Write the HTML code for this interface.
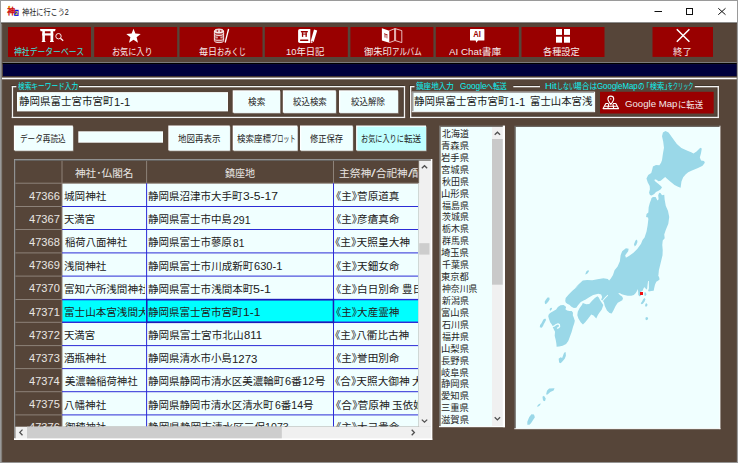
<!DOCTYPE html>
<html lang="ja"><head><meta charset="utf-8"><title>神社に行こう2</title><style>
html,body{margin:0;padding:0}
body{width:738px;height:463px;overflow:hidden;position:relative;background:#564539;font-family:"Liberation Sans","Noto Sans CJK JP",sans-serif}
body div,body span.t,body svg{position:absolute}
div div{position:absolute}
.t{white-space:pre;transform-origin:0 0;display:block}
</style></head><body>
<svg style="left:0;top:0" width="738" height="463" viewBox="0 0 738 463"><rect x="0" y="0" width="738" height="463" fill="#8c8c8c"/><rect x="0" y="0" width="738" height="463" fill="#9a9a9a"/><rect x="1.5" y="1" width="735.3" height="461.1" fill="#6b6259"/><rect x="2.3" y="1" width="734.4" height="461" fill="#564539"/><rect x="1" y="1" width="736" height="21.1" fill="#ffffff"/><rect x="1" y="22.1" width="736" height="0.9" fill="#929292"/><rect x="1" y="23" width="736" height="0.6" fill="#4c3e35"/></svg>
<svg style="left:6px;top:5px" width="14" height="13" viewBox="0 0 14 13"><rect x="8.2" y="4.8" width="4.4" height="6.1" fill="#1010e0"/><text x="1.3" y="9.3" font-size="7.8" font-weight="700" fill="#cc1010" stroke="#cc1010" stroke-width="0.3" font-family='"Liberation Sans","Noto Sans CJK JP",sans-serif'>神</text><text x="8.9" y="10.3" font-size="5.8" font-weight="700" fill="#f0e020" font-family='"Liberation Sans",sans-serif'>2</text><circle cx="3.2" cy="1.9" r="1.1" fill="#e8a020"/></svg>
<span class="t" style="left:21.80px;top:7.90px;font-size:8.5px;line-height:8.5px;color:#161616;transform:scale(0.839,1.000);">神社に行こう2</span>
<svg style="left:650px;top:4px" width="80" height="16" viewBox="0 0 80 16"><g stroke="#111" stroke-width="1" fill="none"><path d="M4.5 7.5H12"/><rect x="36.5" y="4.5" width="6" height="6"/><path d="M68.3 4.3L75.5 10.7M75.5 4.3L68.3 10.7"/></g></svg>
<svg style="left:0;top:0" width="738" height="463" viewBox="0 0 738 463"><rect x="8" y="27" width="83" height="30" fill="#990000"/><rect x="94.2" y="27" width="83" height="30" fill="#990000"/><rect x="179.5" y="27" width="83" height="30" fill="#990000"/><rect x="264.8" y="27" width="83" height="30" fill="#990000"/><rect x="350.4" y="27" width="83" height="30" fill="#990000"/><rect x="435.8" y="27" width="83" height="30" fill="#990000"/><rect x="521.5" y="27" width="83" height="30" fill="#990000"/><rect x="652.5" y="27" width="60.5" height="29.9" fill="#990000"/></svg>
<svg style="left:0;top:24px" width="738" height="36" viewBox="0 24 738 36">
<g fill="#fff">
<!-- torii -->
<path d="M40 29H55.6L55 31.3H40.6Z"/><rect x="42.3" y="31" width="2.6" height="11"/><rect x="50.5" y="31" width="2.7" height="11"/><rect x="42.3" y="33.3" width="10.9" height="2.2"/><rect x="41.8" y="41" width="3.6" height="1"/><rect x="50" y="41" width="3.7" height="1"/>
<!-- star -->
<path d="M133.5 28.7L135.4 33.6L140.7 33.9L136.6 37.2L138 42.8L133.5 39.7L129 42.8L130.4 37.2L126.3 33.9L131.6 33.6Z"/>
<!-- grid -->
<rect x="556" y="29" width="6" height="5.9"/><rect x="564" y="29" width="6" height="5.9"/><rect x="556" y="36.7" width="6" height="6"/><rect x="564" y="36.7" width="6" height="6"/>
<!-- AI bubble -->
<path d="M470.6 29H483.8Q484.4 29 484.4 29.6V40Q484.4 40.6 483.8 40.6H478L476.4 42.8L475.6 40.6H470.6Q470 40.6 470 40V29.6Q470 29 470.6 29Z"/>
<!-- diary -->
<path d="M299.8 29H310.3V43H299.8Q298.1 43 298.1 41.3V30.7Q298.1 29 299.8 29Z"/>
<path d="M314 29.6L317.2 30.5L313.8 41.6L311.2 43.2L310.9 40.6Z"/>
<!-- album left leaf -->
<path d="M381.9 28.3L389.3 30.8V42.8L381.9 40.5Z"/>
</g>
<g fill="none" stroke="#fff">
<circle cx="58.5" cy="36.2" r="2.7" stroke-width="0.9"/><path d="M60.4 38.2L63.2 40.8" stroke-width="1.2"/>
<!-- omikuji -->
<g stroke-width="0.8" stroke="#fff"><path d="M214.4 31V40.6A4.6 2 0 0 0 223.6 40.6V31" fill="#fff" fill-opacity="0.28"/><ellipse cx="219" cy="31" rx="4.6" ry="2" fill="#fff" fill-opacity="0.75"/><path d="M214.4 33.6A4.6 2 0 0 0 223.6 33.6"/><path d="M214.4 35.6A4.6 2 0 0 0 223.6 35.6" stroke-opacity="0.7"/><path d="M214.4 38.6A4.6 2 0 0 0 223.6 38.6" stroke-opacity="0.8"/></g>
<path d="M228.6 29L225.2 42.5" stroke-width="1.3"/>
<!-- album -->
<g stroke-width="0.9" stroke="#f0d0d0"><path d="M389.3 30.8L395 28.6L401.8 30.6V42.6L395 40.5L389.3 42.6"/><path d="M394.6 28.6V40.5M395.6 28.6V40.5"/></g>
<!-- exit X -->
<path d="M676.8 29.2L689.4 41.8M689.4 29.2L676.8 41.8" stroke-width="1.5"/>
</g>
<g fill="#990000">
<rect x="217.8" y="36.4" width="2.6" height="2.6"/><circle cx="217.4" cy="30.9" r="0.75"/><circle cx="220.7" cy="30.9" r="0.75"/>
<path d="M300.7 31H308L307.5 32.5H301.2Z"/><rect x="301.9" y="32.2" width="1.3" height="4.7"/><rect x="305.5" y="32.2" width="1.3" height="4.7"/><rect x="301.9" y="33.6" width="4.9" height="1"/>
<rect x="300" y="39.6" width="8.4" height="1.3" rx="0.6"/>
<path d="M384 33.2L387.6 34.4L387.4 35.3L384.2 34.3Z"/><path d="M384.6 34.4L385.4 34.6V37.8L384.6 37.5ZM386.6 35L387.3 35.2V38.4L386.6 38.2Z"/>
<circle cx="312.2" cy="41.3" r="0.6"/>
</g>
<text x="473.3" y="37.4" font-size="8.2" font-weight="700" fill="#990000" font-family='"Liberation Sans",sans-serif' textLength="7.6" lengthAdjust="spacingAndGlyphs">AI</text>
</svg>
<span class="t" style="left:14.00px;top:47.00px;font-size:9.5px;line-height:9.5px;color:#35e0dc;transform:scale(0.823,1.000);">神社データーベース</span><span class="t" style="left:111.60px;top:46.90px;font-size:9.5px;line-height:9.5px;color:#f4e8e8;transform:scale(0.855,1.000);">お気に入り</span><span class="t" style="left:199.20px;top:47.00px;font-size:9.5px;line-height:9.5px;color:#f4e8e8;transform:scale(0.952,1.000);">毎日</span><span class="t" style="left:216.70px;top:46.65px;font-size:9.5px;line-height:9.5px;color:#f4e8e8;transform:scale(0.759,1.000);">おみくじ</span><span class="t" style="left:285.60px;top:47.10px;font-size:9.5px;line-height:9.5px;color:#f4e8e8;transform:scale(0.985,1.000);">10年日記</span><span class="t" style="left:363.90px;top:46.85px;font-size:9.5px;line-height:9.5px;color:#f4e8e8;transform:scale(0.975,1.000);">御朱印</span><span class="t" style="left:391.90px;top:47.10px;font-size:9.5px;line-height:9.5px;color:#f4e8e8;transform:scale(0.785,1.000);">アルバム</span><span class="t" style="left:448.80px;top:47.00px;font-size:9.5px;line-height:9.5px;color:#f4e8e8;transform:scale(1.030,1.000);">AI Chat書庫</span><span class="t" style="left:543.20px;top:47.00px;font-size:9.5px;line-height:9.5px;color:#f4e8e8;transform:scale(0.966,1.000);">各種設定</span><span class="t" style="left:673.30px;top:46.95px;font-size:9.5px;line-height:9.5px;color:#f4e8e8;transform:scale(0.995,1.000);">終了</span>
<svg style="left:0;top:0" width="738" height="463" viewBox="0 0 738 463"><rect x="2.6" y="62" width="734.1" height="1" fill="#8a8a8a"/><rect x="2.6" y="62.9" width="734.1" height="1.3" fill="#000000"/><rect x="2.9" y="64.1" width="733.8" height="12.1" fill="#00003c"/><rect x="2.6" y="76.3" width="734.1" height="1.3" fill="#46372f"/><rect x="2" y="77.6" width="734.7" height="1.7" fill="#ffffff"/><rect x="10.9" y="85.1" width="1" height="32.05" fill="#41352c"/><rect x="402.9" y="87.3" width="1" height="29.45" fill="#41352c"/><rect x="13.1" y="115.85" width="390.7" height="1" fill="#41352c"/><rect x="11.8" y="86" width="1.3" height="32.05" fill="#f4f4f4"/><rect x="403.8" y="86" width="1.3" height="32.05" fill="#f4f4f4"/><rect x="11.8" y="116.75" width="393.3" height="1.3" fill="#f4f4f4"/><rect x="11.8" y="85.1" width="3.5" height="1" fill="#41352c"/><rect x="11.8" y="86" width="4.5" height="1.3" fill="#f4f4f4"/><rect x="79" y="85.1" width="325.1" height="1" fill="#41352c"/><rect x="79" y="86" width="326.1" height="1.3" fill="#f4f4f4"/><rect x="409.1" y="85.1" width="1" height="32.05" fill="#41352c"/><rect x="716.7" y="87.3" width="1" height="29.45" fill="#41352c"/><rect x="411.3" y="115.85" width="306.3" height="1" fill="#41352c"/><rect x="410" y="86" width="1.3" height="32.05" fill="#f4f4f4"/><rect x="717.6" y="86" width="1.3" height="32.05" fill="#f4f4f4"/><rect x="410" y="116.75" width="308.9" height="1.3" fill="#f4f4f4"/><rect x="410" y="85.1" width="3.5" height="1" fill="#41352c"/><rect x="410" y="86" width="4.5" height="1.3" fill="#f4f4f4"/><rect x="513.3" y="85.1" width="25.7" height="1" fill="#41352c"/><rect x="513.3" y="86" width="26.7" height="1.3" fill="#f4f4f4"/><rect x="694.8" y="85.1" width="23.1" height="1" fill="#41352c"/><rect x="694.8" y="86" width="24.1" height="1.3" fill="#f4f4f4"/></svg>
<span class="t" style="left:17.50px;top:82.40px;font-size:8.3px;line-height:8.3px;color:#0cf2f2;transform:scale(0.806,1.000);">検索キーワード入力</span><span class="t" style="left:415.80px;top:82.40px;font-size:8.3px;line-height:8.3px;color:#0cf2f2;transform:scale(0.912,1.000);">鎮座地入力</span><span class="t" style="left:459.70px;top:82.45px;font-size:8.4px;line-height:8.4px;color:#0cf2f2;transform:scale(0.987,1.000);">Google</span><span class="t" style="left:485.90px;top:82.40px;font-size:8.3px;line-height:8.3px;color:#0cf2f2;transform:scale(0.833,1.000);">へ転送</span><span class="t" style="left:545.10px;top:82.45px;font-size:8.4px;line-height:8.4px;color:#0cf2f2;transform:scale(1.140,1.000);">Hit</span><span class="t" style="left:556.90px;top:81.95px;font-size:8.3px;line-height:8.3px;color:#0cf2f2;transform:scale(0.720,1.000);">しない</span><span class="t" style="left:573.60px;top:82.40px;font-size:8.3px;line-height:8.3px;color:#0cf2f2;transform:scale(0.931,1.000);">場合は</span><span class="t" style="left:597.30px;top:82.45px;font-size:8.4px;line-height:8.4px;color:#0cf2f2;transform:scale(0.940,1.000);">GoogleMap</span><span class="t" style="left:637.90px;top:82.05px;font-size:8.3px;line-height:8.3px;color:#0cf2f2;transform:scale(0.787,1.000);">の</span><span class="t" style="left:645.50px;top:82.40px;font-size:8.3px;line-height:8.3px;color:#0cf2f2;transform:scale(0.880,1.000);">｢検索｣</span><span class="t" style="left:668.30px;top:81.95px;font-size:8.3px;line-height:8.3px;color:#0cf2f2;transform:scale(0.609,1.000);">をクリック</span>
<svg style="left:0;top:0" width="738" height="463" viewBox="0 0 738 463"><rect x="17" y="92.1" width="211" height="19.3" fill="#fbffff"/><rect x="18" y="93.1" width="209" height="17.3" fill="#F0FFFF"/></svg>
<span class="t" style="left:18.70px;top:96.35px;font-size:10.7px;line-height:10.7px;color:#181818;transform:scale(0.983,1.000);">静岡県富士宮市宮町</span><span class="t" style="left:114.00px;top:96.50px;font-size:10.7px;line-height:10.7px;color:#181818;transform:scale(1.048,1.000);">1-1</span>
<svg style="left:0;top:0" width="738" height="463" viewBox="0 0 738 463"><rect x="411.8" y="91.7" width="183.3" height="20.5" fill="#ffffff"/><rect x="411.8" y="91.7" width="182.3" height="19.6" fill="#9d9d9d"/><rect x="413.5" y="92.9" width="180.6" height="18.4" fill="#F0FFFF"/></svg>
<span class="t" style="left:413.70px;top:96.15px;font-size:10.7px;line-height:10.7px;color:#181818;transform:scale(0.983,1.000);">静岡県富士宮市宮町</span><span class="t" style="left:508.90px;top:96.50px;font-size:10.7px;line-height:10.7px;color:#181818;transform:scale(1.059,1.000);">1-1</span><span class="t" style="left:529.80px;top:96.15px;font-size:10.7px;line-height:10.7px;color:#181818;transform:scale(0.972,1.000);">富士山本宮浅</span>
<svg style="left:0;top:0" width="738" height="463" viewBox="0 0 738 463"><rect x="233.7" y="91.3" width="47" height="22.3" fill="#9e9993"/><rect x="232.7" y="90.3" width="47.3" height="22.4" fill="#ffffff"/><rect x="233.9" y="91.4" width="46.1" height="21.3" fill="#F0FFFF"/></svg>
<span class="t" style="left:248.20px;top:98.25px;font-size:9.2px;line-height:9.2px;color:#222;transform:scale(0.939,1.000);">検索</span>
<svg style="left:0;top:0" width="738" height="463" viewBox="0 0 738 463"><rect x="283.8" y="91.3" width="52.6" height="22.3" fill="#9e9993"/><rect x="282.8" y="90.3" width="52.9" height="22.4" fill="#ffffff"/><rect x="284" y="91.4" width="51.7" height="21.3" fill="#F0FFFF"/></svg>
<span class="t" style="left:292.60px;top:98.25px;font-size:9.2px;line-height:9.2px;color:#222;transform:scale(0.919,1.000);">絞込検索</span>
<svg style="left:0;top:0" width="738" height="463" viewBox="0 0 738 463"><rect x="340" y="91.3" width="58.6" height="22.3" fill="#9e9993"/><rect x="339" y="90.3" width="58.9" height="22.4" fill="#ffffff"/><rect x="340.2" y="91.4" width="57.7" height="21.3" fill="#F0FFFF"/></svg>
<span class="t" style="left:351.30px;top:98.25px;font-size:9.2px;line-height:9.2px;color:#222;transform:scale(0.924,1.000);">絞込解除</span>
<svg style="left:0;top:0" width="738" height="463" viewBox="0 0 738 463"><rect x="14.9" y="126.5" width="58.6" height="24.8" fill="#9e9993"/><rect x="13.9" y="125.5" width="58.9" height="24.9" fill="#ffffff"/><rect x="15.1" y="126.6" width="57.7" height="23.8" fill="#F0FFFF"/></svg>
<span class="t" style="left:20.20px;top:135.10px;font-size:9.2px;line-height:9.2px;color:#222;transform:scale(0.828,1.000);">データ再読込</span>
<svg style="left:0;top:0" width="738" height="463" viewBox="0 0 738 463"><rect x="78.3" y="131.3" width="84.7" height="11.4" fill="#fbffff"/><rect x="79.3" y="132.3" width="82.7" height="9.4" fill="#F0FFFF"/><rect x="169.3" y="126.5" width="61.1" height="24.8" fill="#9e9993"/><rect x="168.3" y="125.5" width="61.4" height="24.9" fill="#ffffff"/><rect x="169.5" y="126.6" width="60.2" height="23.8" fill="#F0FFFF"/></svg>
<span class="t" style="left:178.00px;top:134.95px;font-size:9.2px;line-height:9.2px;color:#222;transform:scale(0.924,1.000);">地図再表示</span>
<svg style="left:0;top:0" width="738" height="463" viewBox="0 0 738 463"><rect x="233.7" y="126.5" width="64.3" height="24.8" fill="#9e9993"/><rect x="232.7" y="125.5" width="64.6" height="24.9" fill="#ffffff"/><rect x="233.9" y="126.6" width="63.4" height="23.8" fill="#F0FFFF"/></svg>
<span class="t" style="left:237.30px;top:134.95px;font-size:9.2px;line-height:9.2px;color:#222;transform:scale(0.924,1.000);">検索座標</span><span class="t" style="left:270.60px;top:135.05px;font-size:9.2px;line-height:9.2px;color:#222;transform:scale(0.669,1.000);">プロット</span>
<svg style="left:0;top:0" width="738" height="463" viewBox="0 0 738 463"><rect x="301" y="126.5" width="52.3" height="24.8" fill="#9e9993"/><rect x="300" y="125.5" width="52.6" height="24.9" fill="#ffffff"/><rect x="301.2" y="126.6" width="51.4" height="23.8" fill="#F0FFFF"/></svg>
<span class="t" style="left:310.20px;top:134.95px;font-size:9.2px;line-height:9.2px;color:#222;transform:scale(0.900,1.000);">修正保存</span>
<svg style="left:0;top:0" width="738" height="463" viewBox="0 0 738 463"><rect x="357.1" y="126.5" width="69.6" height="24.8" fill="#9e9993"/><rect x="356.1" y="125.5" width="69.9" height="24.9" fill="#ffffff"/><rect x="357.3" y="126.6" width="68.7" height="23.8" fill="#c0ffff"/></svg>
<span class="t" style="left:360.70px;top:134.95px;font-size:9.2px;line-height:9.2px;color:#222;transform:scale(0.778,1.000);">お気に入りに</span><span class="t" style="left:404.20px;top:134.95px;font-size:9.2px;line-height:9.2px;color:#222;transform:scale(0.929,1.000);">転送</span>
<svg style="left:0;top:0" width="738" height="463" viewBox="0 0 738 463"><rect x="600" y="91.8" width="113.7" height="21.7" fill="#990000"/></svg>
<svg style="left:602px;top:94px" width="18" height="16" viewBox="602 94 18 16"><g fill="none" stroke="#fff" stroke-width="1.1" stroke-linejoin="round">
<path d="M610.8 104.4C608.8 101.8 607.9 100.5 607.9 99A2.9 2.9 0 0 1 613.7 99C613.7 100.5 612.8 101.8 610.8 104.4Z"/><circle cx="610.8" cy="98.9" r="0.7" fill="#fff" stroke="none"/>
<path d="M608.6 103.5H605.8L603.1 108.6H618.5L615.8 103.5H613M604.5 106.2H617.1M608.7 103.8L607.9 108.6M612.9 103.8L613.7 108.6"/></g></svg>
<span class="t" style="left:625.40px;top:100.40px;font-size:9.8px;line-height:9.8px;color:#f4e8e8;transform:scale(0.982,0.930);">Google Map</span><span class="t" style="left:677.60px;top:100.70px;font-size:9.2px;line-height:9.2px;color:#f4e8e8;transform:scale(0.908,1.000);">に転送</span>
<svg style="left:0;top:0" width="738" height="463" viewBox="0 0 738 463"><rect x="14" y="159" width="418.2" height="281" fill="#ffffff"/><rect x="14" y="159" width="416.9" height="279.5" fill="#9c9c9c"/><rect x="14.8" y="159.8" width="416.1" height="278.7" fill="#6a6a6a"/><rect x="15.4" y="160.8" width="416.2" height="278.6" fill="#564539"/><rect x="62" y="183.2" width="356.3" height="243.5" fill="#F0FFFF"/><rect x="62" y="299.6" width="356.3" height="22.4" fill="#00ffff"/><rect x="15.4" y="182.7" width="46.6" height="1" fill="#8d8279"/><rect x="62" y="182.7" width="356.3" height="1" fill="#8d8279"/><rect x="61.5" y="160.8" width="1" height="22.4" fill="#8d8279"/><rect x="146.1" y="160.8" width="1" height="22.4" fill="#8d8279"/><rect x="333" y="160.8" width="1" height="22.4" fill="#8d8279"/><rect x="15.4" y="206" width="46.6" height="1" fill="#8d8279"/><rect x="15.4" y="229" width="46.6" height="1" fill="#8d8279"/><rect x="15.4" y="252.4" width="46.6" height="1" fill="#8d8279"/><rect x="15.4" y="275.6" width="46.6" height="1" fill="#8d8279"/><rect x="15.4" y="299" width="46.6" height="1" fill="#8d8279"/><rect x="15.4" y="321.8" width="46.6" height="1" fill="#8d8279"/><rect x="15.4" y="345.1" width="46.6" height="1" fill="#8d8279"/><rect x="15.4" y="368.1" width="46.6" height="1" fill="#8d8279"/><rect x="15.4" y="391.2" width="46.6" height="1" fill="#8d8279"/><rect x="15.4" y="414.4" width="46.6" height="1" fill="#8d8279"/><rect x="61.5" y="183.2" width="1" height="243.5" fill="#8d8279"/><rect x="62" y="206" width="356.3" height="1" fill="#2c2cd6"/><rect x="62" y="229" width="356.3" height="1" fill="#2c2cd6"/><rect x="62" y="252.4" width="356.3" height="1" fill="#2c2cd6"/><rect x="62" y="275.6" width="356.3" height="1" fill="#2c2cd6"/><rect x="62" y="299" width="356.3" height="1" fill="#2c2cd6"/><rect x="62" y="321.8" width="356.3" height="1" fill="#2c2cd6"/><rect x="62" y="345.1" width="356.3" height="1" fill="#2c2cd6"/><rect x="62" y="368.1" width="356.3" height="1" fill="#2c2cd6"/><rect x="62" y="391.2" width="356.3" height="1" fill="#2c2cd6"/><rect x="62" y="414.4" width="356.3" height="1" fill="#2c2cd6"/><rect x="146.1" y="183.2" width="1" height="243.5" fill="#2c2cd6"/><rect x="333" y="183.2" width="1" height="243.5" fill="#2c2cd6"/><rect x="62" y="298.9" width="356.3" height="1.4" fill="#2c2cd6"/><rect x="62" y="321.7" width="356.3" height="1.3" fill="#2c2cd6"/><rect x="146" y="298.9" width="188.1" height="1.5" fill="#1c1cb8"/><rect x="146" y="321.6" width="188.1" height="1.5" fill="#1c1cb8"/><rect x="146" y="298.9" width="1.5" height="24.2" fill="#1c1cb8"/><rect x="332.7" y="298.9" width="1.5" height="24.2" fill="#1c1cb8"/></svg>
<span class="t" style="left:75.30px;top:168.70px;font-size:10.45px;line-height:10.45px;color:#e9e6e3;transform:scale(1.017,1.000);">神社･仏閣名</span><span class="t" style="left:224.70px;top:168.70px;font-size:10.45px;line-height:10.45px;color:#e9e6e3;transform:scale(0.962,1.000);">鎮座地</span><span class="t" style="left:339.30px;top:168.70px;font-size:10.45px;line-height:10.45px;color:#e9e6e3;transform:scale(1.028,1.000);">主祭神</span><span class="t" style="left:371.30px;top:168.90px;font-size:10.45px;line-height:10.45px;color:#e9e6e3;transform:scale(1.597,1.000);">/</span><span class="t" style="left:375.80px;top:168.70px;font-size:10.45px;line-height:10.45px;color:#e9e6e3;transform:scale(1.007,1.000);">合祀神</span><span class="t" style="left:407.80px;top:168.90px;font-size:10.45px;line-height:10.45px;color:#e9e6e3;transform:scale(1.709,1.000);">/</span>
<div style="left:412px;top:165.70px;width:6.300000000000011px;height:18.45px;overflow:hidden"><span class="t" style="left:0.30px;top:3px;font-size:10.45px;line-height:10.45px;color:#e9e6e3;transform:scale(1.030,1.000);">配祀神</span></div>
<span class="t" style="left:29.30px;top:190.80px;font-size:10.6px;line-height:10.6px;color:#e9e6e3;transform:scale(1.046,1.000);">47366</span>
<div style="left:62.5px;top:189.15px;width:82.69999999999999px;height:18.45px;overflow:hidden"><span class="t" style="left:1.60px;top:3px;font-size:10.45px;line-height:10.45px;color:#202020;transform:scale(1.012,1.000);">城岡神社</span></div>
<span class="t" style="left:147.90px;top:192.15px;font-size:10.45px;line-height:10.45px;color:#202020;transform:scale(1.006,1.000);">静岡県沼津市大手町</span><span class="t" style="left:242.77px;top:192.45px;font-size:10.45px;line-height:10.45px;color:#202020;transform:scale(1.161,1.000);">3-5-17</span>
<div style="left:334.0px;top:189.15px;width:84.30000000000001px;height:18.45px;overflow:hidden"><span class="t" style="left:2.00px;top:3px;font-size:10.45px;line-height:10.45px;color:#202020;transform:scale(1.011,1.000);font-feature-settings:'halt';">《主》菅原道真</span></div>
<span class="t" style="left:29.30px;top:213.95px;font-size:10.6px;line-height:10.6px;color:#e9e6e3;transform:scale(1.046,1.000);">47367</span>
<div style="left:62.5px;top:212.30px;width:82.69999999999999px;height:18.45px;overflow:hidden"><span class="t" style="left:1.60px;top:3px;font-size:10.45px;line-height:10.45px;color:#202020;transform:scale(0.991,1.000);">天満宮</span></div>
<span class="t" style="left:147.90px;top:215.30px;font-size:10.45px;line-height:10.45px;color:#202020;transform:scale(1.004,1.000);">静岡県富士市中島</span><span class="t" style="left:233.34px;top:215.60px;font-size:10.45px;line-height:10.45px;color:#202020;transform:scale(1.008,1.000);">291</span>
<div style="left:334.0px;top:212.30px;width:84.30000000000001px;height:18.45px;overflow:hidden"><span class="t" style="left:2.00px;top:3px;font-size:10.45px;line-height:10.45px;color:#202020;transform:scale(1.011,1.000);font-feature-settings:'halt';">《主》彦瘡真命</span></div>
<span class="t" style="left:29.30px;top:237.10px;font-size:10.6px;line-height:10.6px;color:#e9e6e3;transform:scale(1.046,1.000);">47368</span>
<div style="left:62.5px;top:235.45px;width:82.69999999999999px;height:18.45px;overflow:hidden"><span class="t" style="left:2.60px;top:3px;font-size:10.45px;line-height:10.45px;color:#202020;transform:scale(0.990,1.000);">稲荷八面神社</span></div>
<span class="t" style="left:147.90px;top:238.45px;font-size:10.45px;line-height:10.45px;color:#202020;transform:scale(1.004,1.000);">静岡県富士市蓼原</span><span class="t" style="left:233.34px;top:238.75px;font-size:10.45px;line-height:10.45px;color:#202020;transform:scale(0.978,1.000);">81</span>
<div style="left:334.0px;top:235.45px;width:84.30000000000001px;height:18.45px;overflow:hidden"><span class="t" style="left:1.00px;top:3px;font-size:10.45px;line-height:10.45px;color:#202020;transform:scale(1.028,1.000);font-feature-settings:'halt';">《主》天照皇大神</span></div>
<span class="t" style="left:29.30px;top:260.25px;font-size:10.6px;line-height:10.6px;color:#e9e6e3;transform:scale(1.046,1.000);">47369</span>
<div style="left:62.5px;top:258.60px;width:82.69999999999999px;height:18.45px;overflow:hidden"><span class="t" style="left:1.60px;top:3px;font-size:10.45px;line-height:10.45px;color:#202020;transform:scale(1.012,1.000);">浅間神社</span></div>
<span class="t" style="left:147.90px;top:261.60px;font-size:10.45px;line-height:10.45px;color:#202020;transform:scale(1.008,1.000);">静岡県富士市川成新町</span><span class="t" style="left:254.20px;top:261.90px;font-size:10.45px;line-height:10.45px;color:#202020;transform:scale(1.062,1.000);">630-1</span>
<div style="left:334.0px;top:258.60px;width:84.30000000000001px;height:18.45px;overflow:hidden"><span class="t" style="left:2.00px;top:3px;font-size:10.45px;line-height:10.45px;color:#202020;transform:scale(1.011,1.000);font-feature-settings:'halt';">《主》天鈿女命</span></div>
<span class="t" style="left:29.30px;top:283.40px;font-size:10.6px;line-height:10.6px;color:#e9e6e3;transform:scale(1.046,1.000);">47370</span>
<div style="left:62.5px;top:281.75px;width:82.69999999999999px;height:18.45px;overflow:hidden"><span class="t" style="left:1.60px;top:3px;font-size:10.45px;line-height:10.45px;color:#202020;transform:scale(1.012,1.000);">富知六所浅間神社</span></div>
<span class="t" style="left:147.90px;top:284.75px;font-size:10.45px;line-height:10.45px;color:#202020;transform:scale(1.008,1.000);">静岡県富士市浅間本町</span><span class="t" style="left:253.20px;top:285.05px;font-size:10.45px;line-height:10.45px;color:#202020;transform:scale(1.192,1.000);">5-1</span><span class="t" style="left:336.00px;top:284.75px;font-size:10.45px;line-height:10.45px;color:#202020;transform:scale(1.011,1.000);font-feature-settings:'halt';">《主》白日別命</span>
<div style="left:334.0px;top:281.75px;width:84.30000000000001px;height:18.45px;overflow:hidden"><span class="t" style="left:68.30px;top:3px;font-size:10.45px;line-height:10.45px;color:#202020;transform:scale(1.012,1.000);">豊日別命</span></div>
<span class="t" style="left:29.30px;top:306.55px;font-size:10.6px;line-height:10.6px;color:#e9e6e3;transform:scale(1.046,1.000);">47371</span>
<div style="left:62.5px;top:304.90px;width:82.69999999999999px;height:18.45px;overflow:hidden"><span class="t" style="left:1.60px;top:3px;font-size:10.45px;line-height:10.45px;color:#202020;transform:scale(1.013,1.000);">富士山本宮浅間大社</span></div>
<span class="t" style="left:147.90px;top:307.90px;font-size:10.45px;line-height:10.45px;color:#202020;transform:scale(1.006,1.000);">静岡県富士宮市宮町</span><span class="t" style="left:242.77px;top:308.20px;font-size:10.45px;line-height:10.45px;color:#202020;transform:scale(1.148,1.000);">1-1</span>
<div style="left:334.0px;top:304.90px;width:84.30000000000001px;height:18.45px;overflow:hidden"><span class="t" style="left:2.00px;top:3px;font-size:10.45px;line-height:10.45px;color:#202020;transform:scale(1.011,1.000);font-feature-settings:'halt';">《主》大産霊神</span></div>
<span class="t" style="left:29.30px;top:329.70px;font-size:10.6px;line-height:10.6px;color:#e9e6e3;transform:scale(1.046,1.000);">47372</span>
<div style="left:62.5px;top:328.05px;width:82.69999999999999px;height:18.45px;overflow:hidden"><span class="t" style="left:1.60px;top:3px;font-size:10.45px;line-height:10.45px;color:#202020;transform:scale(0.991,1.000);">天満宮</span></div>
<span class="t" style="left:147.90px;top:331.05px;font-size:10.45px;line-height:10.45px;color:#202020;transform:scale(1.017,1.000);">静岡県富士宮市北山</span><span class="t" style="left:243.77px;top:331.35px;font-size:10.45px;line-height:10.45px;color:#202020;transform:scale(1.081,1.000);">811</span>
<div style="left:334.0px;top:328.05px;width:84.30000000000001px;height:18.45px;overflow:hidden"><span class="t" style="left:1.00px;top:3px;font-size:10.45px;line-height:10.45px;color:#202020;transform:scale(1.016,1.000);font-feature-settings:'halt';">《主》八衢比古神</span></div>
<span class="t" style="left:29.30px;top:352.85px;font-size:10.6px;line-height:10.6px;color:#e9e6e3;transform:scale(1.046,1.000);">47373</span>
<div style="left:62.5px;top:351.20px;width:82.69999999999999px;height:18.45px;overflow:hidden"><span class="t" style="left:1.60px;top:3px;font-size:10.45px;line-height:10.45px;color:#202020;transform:scale(1.012,1.000);">酒瓶神社</span></div>
<span class="t" style="left:147.90px;top:354.20px;font-size:10.45px;line-height:10.45px;color:#202020;transform:scale(1.004,1.000);">静岡県清水市小島</span><span class="t" style="left:232.34px;top:354.50px;font-size:10.45px;line-height:10.45px;color:#202020;transform:scale(1.093,1.000);">1273</span>
<div style="left:334.0px;top:351.20px;width:84.30000000000001px;height:18.45px;overflow:hidden"><span class="t" style="left:2.00px;top:3px;font-size:10.45px;line-height:10.45px;color:#202020;transform:scale(1.011,1.000);font-feature-settings:'halt';">《主》誉田別命</span></div>
<span class="t" style="left:29.30px;top:376.00px;font-size:10.6px;line-height:10.6px;color:#e9e6e3;transform:scale(1.041,1.000);">47374</span>
<div style="left:62.5px;top:374.35px;width:82.69999999999999px;height:18.45px;overflow:hidden"><span class="t" style="left:2.60px;top:3px;font-size:10.45px;line-height:10.45px;color:#202020;transform:scale(0.993,1.000);">美濃輪稲荷神社</span></div>
<span class="t" style="left:147.90px;top:377.35px;font-size:10.45px;line-height:10.45px;color:#202020;transform:scale(1.004,1.000);">静岡県静岡市清水区美濃輪町</span><span class="t" style="left:285.49px;top:377.35px;font-size:10.45px;line-height:10.45px;color:#202020;transform:scale(1.055,1.000);">6番12号</span><span class="t" style="left:335.00px;top:377.35px;font-size:10.45px;line-height:10.45px;color:#202020;transform:scale(1.023,1.000);font-feature-settings:'halt';">《合》天照大御神</span>
<div style="left:334.0px;top:374.35px;width:84.30000000000001px;height:18.45px;overflow:hidden"><span class="t" style="left:78.30px;top:3px;font-size:10.45px;line-height:10.45px;color:#202020;transform:scale(1.015,1.000);">大国主命</span></div>
<span class="t" style="left:29.30px;top:399.15px;font-size:10.6px;line-height:10.6px;color:#e9e6e3;transform:scale(1.046,1.000);">47375</span>
<div style="left:62.5px;top:397.50px;width:82.69999999999999px;height:18.45px;overflow:hidden"><span class="t" style="left:1.60px;top:3px;font-size:10.45px;line-height:10.45px;color:#202020;transform:scale(1.010,1.000);">八幡神社</span></div>
<span class="t" style="left:147.90px;top:400.50px;font-size:10.45px;line-height:10.45px;color:#202020;transform:scale(1.002,1.000);">静岡県静岡市清水区清水町</span><span class="t" style="left:275.06px;top:400.50px;font-size:10.45px;line-height:10.45px;color:#202020;transform:scale(1.007,1.000);">6番14号</span><span class="t" style="left:336.00px;top:400.50px;font-size:10.45px;line-height:10.45px;color:#202020;transform:scale(1.031,1.000);font-feature-settings:'halt';">《合》菅原神</span>
<div style="left:334.0px;top:397.50px;width:84.30000000000001px;height:18.45px;overflow:hidden"><span class="t" style="left:58.30px;top:3px;font-size:10.45px;line-height:10.45px;color:#202020;transform:scale(1.012,1.000);">玉依姫命</span></div>
<div style="left:15.4px;top:414.59999999999997px;width:46.6px;height:12.100000000000023px;overflow:hidden"><span class="t" style="left:13.90px;top:7.10px;font-size:10.6px;line-height:10.6px;color:#e9e6e3;transform:scale(1.046,1.000);">47376</span></div>
<div style="left:62.5px;top:414.59999999999997px;width:82.69999999999999px;height:12.100000000000023px;overflow:hidden"><span class="t" style="left:2.60px;top:8.25px;font-size:10.45px;line-height:10.45px;color:#202020;transform:scale(0.986,1.000);">御穂神社</span></div>
<div style="left:147.1px;top:414.59999999999997px;width:185.9px;height:12.100000000000023px;overflow:hidden"><span class="t" style="left:0.80px;top:8.25px;font-size:10.45px;line-height:10.45px;color:#202020;transform:scale(1.020,1.000);">静岡県静岡市清水区三保1073</span></div>
<div style="left:334.0px;top:414.59999999999997px;width:84.30000000000001px;height:12.100000000000023px;overflow:hidden"><span class="t" style="left:2.00px;top:8.25px;font-size:10.45px;line-height:10.45px;color:#202020;transform:scale(1.011,1.000);font-feature-settings:'halt';">《主》大己貴命</span></div>
<svg style="left:0;top:0" width="738" height="463" viewBox="0 0 738 463"><rect x="418.3" y="160.8" width="13.3" height="265.9" fill="#F0FFFF"/><rect x="418.3" y="160.8" width="13.3" height="22.4" fill="#564539"/><rect x="419.1" y="160.8" width="12.5" height="265.9" fill="#f0f0f0"/><rect x="419.2" y="243.2" width="10.3" height="11.4" fill="#cdcdcd"/><rect x="15.4" y="426.7" width="416.2" height="12.7" fill="#f0f0f0"/><rect x="27" y="426.7" width="254.8" height="12.7" fill="#cdcdcd"/></svg>
<svg style="left:0;top:0" width="738" height="463" viewBox="0 0 738 463"><g fill="none" stroke="#505050" stroke-width="1.3">
<path d="M421.8 168.3L424.5 165.7L427.2 168.3"/><path d="M421.8 419.6L424.5 422.2L427.2 419.6"/>
<path d="M22.5 429.6L19.8 432.4L22.5 435.2"/><path d="M411.7 429.7L414.4 432.5L411.7 435.3"/>
</g></svg>
<svg style="left:0;top:0" width="738" height="463" viewBox="0 0 738 463"><rect x="430.9" y="159" width="1.3" height="281" fill="#ffffff"/><rect x="14" y="438.4" width="418.2" height="1.6" fill="#ffffff"/><rect x="439" y="125.6" width="65.5" height="301.1" fill="#77726d"/><rect x="440.7" y="127" width="63.3" height="299.8" fill="#F0FFFF"/><rect x="492" y="127" width="12" height="299.8" fill="#f0f0f0"/><rect x="492" y="139" width="12" height="145.7" fill="#c9c9c9"/><rect x="502.8" y="125.6" width="2.2" height="301.6" fill="#ffffff"/><rect x="439" y="426.1" width="66" height="1.1" fill="#ffffff"/></svg>
<svg style="left:490px;top:126px" width="14" height="300" viewBox="490 126 14 300"><g fill="none" stroke="#505050" stroke-width="1.3"><path d="M494.7 134.8L497.4 132.2L500.1 134.8"/><path d="M494.7 417.3L497.4 419.9L500.1 417.3"/></g></svg>
<span class="t" style="left:442.40px;top:129.95px;font-size:9.0px;line-height:9.0px;color:#262626;transform:scale(0.995,1.000);">北海道</span><span class="t" style="left:441.40px;top:141.88px;font-size:9.0px;line-height:9.0px;color:#262626;transform:scale(1.038,1.000);">青森県</span><span class="t" style="left:441.40px;top:153.81px;font-size:9.0px;line-height:9.0px;color:#262626;transform:scale(1.038,1.000);">岩手県</span><span class="t" style="left:441.40px;top:165.74px;font-size:9.0px;line-height:9.0px;color:#262626;transform:scale(1.038,1.000);">宮城県</span><span class="t" style="left:442.40px;top:177.67px;font-size:9.0px;line-height:9.0px;color:#262626;transform:scale(0.994,1.000);">秋田県</span><span class="t" style="left:441.40px;top:189.60px;font-size:9.0px;line-height:9.0px;color:#262626;transform:scale(1.038,1.000);">山形県</span><span class="t" style="left:442.40px;top:201.53px;font-size:9.0px;line-height:9.0px;color:#262626;transform:scale(0.994,1.000);">福島県</span><span class="t" style="left:442.40px;top:213.46px;font-size:9.0px;line-height:9.0px;color:#262626;transform:scale(0.994,1.000);">茨城県</span><span class="t" style="left:442.40px;top:225.39px;font-size:9.0px;line-height:9.0px;color:#262626;transform:scale(0.994,1.000);">栃木県</span><span class="t" style="left:442.40px;top:237.32px;font-size:9.0px;line-height:9.0px;color:#262626;transform:scale(0.994,1.000);">群馬県</span><span class="t" style="left:441.40px;top:249.25px;font-size:9.0px;line-height:9.0px;color:#262626;transform:scale(1.034,1.000);">埼玉県</span><span class="t" style="left:442.40px;top:261.18px;font-size:9.0px;line-height:9.0px;color:#262626;transform:scale(0.994,1.000);">千葉県</span><span class="t" style="left:441.40px;top:273.11px;font-size:9.0px;line-height:9.0px;color:#262626;transform:scale(1.032,1.000);">東京都</span><span class="t" style="left:442.40px;top:285.04px;font-size:9.0px;line-height:9.0px;color:#262626;transform:scale(0.983,1.000);">神奈川県</span><span class="t" style="left:442.40px;top:296.97px;font-size:9.0px;line-height:9.0px;color:#262626;transform:scale(0.994,1.000);">新潟県</span><span class="t" style="left:441.40px;top:308.90px;font-size:9.0px;line-height:9.0px;color:#262626;transform:scale(1.038,1.000);">富山県</span><span class="t" style="left:442.40px;top:320.83px;font-size:9.0px;line-height:9.0px;color:#262626;transform:scale(0.994,1.000);">石川県</span><span class="t" style="left:442.40px;top:332.76px;font-size:9.0px;line-height:9.0px;color:#262626;transform:scale(0.994,1.000);">福井県</span><span class="t" style="left:441.40px;top:344.69px;font-size:9.0px;line-height:9.0px;color:#262626;transform:scale(1.038,1.000);">山梨県</span><span class="t" style="left:441.40px;top:356.62px;font-size:9.0px;line-height:9.0px;color:#262626;transform:scale(1.038,1.000);">長野県</span><span class="t" style="left:441.40px;top:368.55px;font-size:9.0px;line-height:9.0px;color:#262626;transform:scale(1.034,1.000);">岐阜県</span><span class="t" style="left:441.40px;top:380.48px;font-size:9.0px;line-height:9.0px;color:#262626;transform:scale(1.038,1.000);">静岡県</span><span class="t" style="left:441.40px;top:392.41px;font-size:9.0px;line-height:9.0px;color:#262626;transform:scale(1.038,1.000);">愛知県</span><span class="t" style="left:441.40px;top:404.34px;font-size:9.0px;line-height:9.0px;color:#262626;transform:scale(1.034,1.000);">三重県</span><span class="t" style="left:441.40px;top:416.27px;font-size:9.0px;line-height:9.0px;color:#262626;transform:scale(1.038,1.000);">滋賀県</span>
<svg style="left:0;top:0" width="738" height="463" viewBox="0 0 738 463"><rect x="514.3" y="125.7" width="205.7" height="303.1" fill="#6c6762"/><rect x="515.8" y="127" width="204.2" height="301.8" fill="#F0FFFF"/><rect x="719.6" y="125.7" width="0.8" height="303.5" fill="#ffffff"/><rect x="514.3" y="428.3" width="206.1" height="0.9" fill="#ffffff"/></svg>
<svg style="left:0;top:0" width="738" height="463" viewBox="0 0 738 463"><path d="M665.5 131.05L668.52 132.56L672.3 137.86L676.84 143.91L681.38 147.99L687.43 150.71L691.21 152.23L693.48 153.44L696.51 151.47L700.29 147.69L701.8 148.45L701.04 152.98L699.83 157.52L701.04 160.55L704.07 161L704.82 162.82L702.56 165.84L698.02 168.11L691.97 170.38L688.19 172.19L685.77 174.25L683.18 177.27L681.45 181.59L680.59 187.63L678 186.77L674.54 185.04L670.22 181.59L666.77 178.57L665.22 177.1L663.32 178.57L660.73 180.73L658.57 181.16L656.41 179.69L654.85 179.17L654.51 180.73L657.27 182.88L660.29 185.47L662.02 187.2L660.73 189.36L658.57 190.66L655.98 191.95L654.25 194.11L651.66 195.58L649.93 194.97L649.07 192.82L649.93 189.36L649.67 185.91L647.77 182.45L646.48 178.57L648.2 175.11L651.23 172.95L652.26 169.5L652.95 166.48L655.98 165.01L659.43 165.35L661.16 162.59L662.02 160L662.92 153.74L663.98 147.69L663.23 141.64L662.02 136.34L662.92 132.56ZM651.38 198.15L652.89 196.94L655.61 196.94L656.67 198.91L657.43 200.42L658.64 199.36L658.19 195.13L659.24 192.86L660.76 193.31L661.97 195.13L664.24 194.82L664.69 199.66L665.75 205.71L668.02 211.01L669.23 217.06L668.32 223.87L665.75 229.92L664.24 234.45L664.69 238.24L662.72 240.51L662.27 245.04L662.72 250.03L662.52 255.13L660.71 262.69L658.89 270.25L658.44 275.09L658.17 275.18L659.29 277.77L659.55 279.5L658 280.79L656.27 281.66L654.97 284.68L654.11 288.57L653.68 290.73L651.09 290.98L648.93 291.42L648.07 290.73L648.93 288.13L648.84 281.05L648.07 280.88L647.81 282.95L647.46 285.54L647.2 288.57L646.34 289.43L645.04 287.7L644.18 287.27L643.49 288.57L642.63 290.73L640.73 291.76L640.9 295.91L639.43 296.34L638.31 295.04L638.13 291.59L637.7 289L636.84 291.16L635.54 293.32L633.82 295.04L631.23 295.73L627.77 295.73L624.32 295.04L621.73 294.18L620 293.32L619.99 293.31L618.18 292.88L619.91 295.03L622.06 296.42L623.01 298.14L622.32 300.22L620.08 301.42L617.75 302.81L615.59 306.09L613.43 310.41L611.7 313.43L609.54 313L606.95 310.41L604.79 306.09L603.93 302.46L602.98 301.08L605.4 298.14L608.16 295.38L607.64 294.86L604.79 297.45L602.29 300.56L601.17 299.7L602.12 297.02L601.17 294.52L598.32 293.65L593.13 294.95L588.82 297.54L584.5 300.13L585 299.85L580.77 302.1L578.01 305.21L576.28 307.63L573.86 307.97L571.44 306.76L569.37 304.78L567.64 303.91L565.92 302.7L565.22 300.98L565.66 297.95L568.68 294.5L572.13 291.04L575.59 288.02L579.04 285L575 287.95L578.45 284.5L582.77 280.61L587.09 280.01L592.27 280.35L597.45 279.32L603.5 278.28L607.82 278.89L609.11 280.61L610.84 278.45L613 275L613.06 274.79L614.57 270.25L617.6 266.47L619.87 261.18L620.62 255.13L622.14 251.34L625.92 248.32L628.64 248.77L628.19 251.34L625.16 255.13L625.92 257.85L628.94 255.88L633.48 252.86L637.26 249.08L641.04 243.78L642.56 240L644.57 237.48L646.54 231.43L647.6 225.38L648.35 219.33L648.05 217.51L646.08 217.06L646.54 214.03L648.35 212.52L648.66 207.23L649.87 202.69L651.08 199.66ZM582.06 304.86L582.77 303.07L586.23 304.36L589.25 303.93L591.84 300.91L594.86 297.88L597.45 296.16L598.75 297.45L600.04 300.04L601.77 302.63L603.32 305.05L601.77 309.54L599.18 313L597.88 314.98L596.25 318.4L593.53 315.38L591.26 314.62L588.24 318.4L585.21 322.19L582.94 324.45L580.67 322.19L578.4 318.4L577.31 315.22L577.75 311.77L579.47 308.32ZM548.82 314.36L550.54 312.63L553.57 310.91L556.16 309.61L557.88 307.02L560.47 305.29L563.5 305.03L565.4 306.24L566.09 307.28L565.4 309.18L567.12 310.56L569.54 311.08L571.7 310.91L573 312.63L572.82 315.22L573.86 317.82L574.9 321.27L574.9 320.18L574.29 323.2L573 327.09L571.7 331.84L569.97 336.59L568.25 340.91L566.09 343.93L562.63 345.66L559.18 346.52L556.59 346.78L556.42 343.93L555.73 340.04L554.69 335.73L555.03 331.84L554 329.85L552.7 327.09L552.27 325.19L550.11 322.34L548.82 318.45L547.95 315L548.39 316.09ZM544.93 303.57L544.67 301.84L545.79 299.68L547.52 297.52L549.25 297.52L549.68 299.25L548.39 301.41L546.66 303.57L545.54 304.17ZM549.68 310.04L549.85 308.75L550.98 307.63L552.1 307.88L551.58 309.61L550.54 310.73ZM545.19 318.45L546.14 319.75L544.76 322.6L543.72 324.33L543.29 325.45L541.82 327.87L539.75 327.35L540.09 324.93L541.48 323.29L541.99 322.25L543.38 319.49ZM645.6 317.6L647 317L648.2 318L647.8 319.6L646.4 320.2L645.4 319.2ZM585.21 274.54L586.27 271.51L588.24 270L588.99 271.21L587.18 273.78ZM633.98 244.29L635.5 240.51L637.01 239.45L637.46 242.02L636.25 245.04L634.74 246.56ZM559.11 362.52L558.66 358.74L560.62 357.23L562.14 357.98L564.1 352.69L565.61 351.93L565.92 355.71L564.71 358.74L562.14 361.77L560.62 363.28ZM546.07 394.5L546.98 390.71L549.09 388.45L554.54 388.14L553.63 390.41L550.3 391.92L547.58 394.5ZM542.44 396.77L543.95 395.71L545.77 398.58L545.01 401.3L543.04 400.55ZM536.99 406.14L538.96 404.03L540.92 403.57L539.71 405.54L537.9 406.75ZM527.31 424.75L527.31 421.72L529.13 417.19L531.4 414.16L533.97 414.61L534.87 417.19L532.91 420.21L530.94 423.24L529.43 424.75ZM644.35 292.45L645.47 292.28L646.6 294.18L645.47 295.91L644.35 295.47ZM640.73 303.25L642.02 301.52L643.32 298.93L644.61 298.07L645.47 299.36L644.61 301.52L642.88 303.68L641.59 304.37ZM645.04 306.27L645.47 303.68L646.77 303.25L647.63 304.97L646.34 306.7Z" fill="#9ad8e8"/><path d="M552.18 326.74L554.52 325.79L556.24 324.5L557.97 323.89L559.35 324.67L559.61 326.57L558.49 327.69L557.54 328.13" fill="none" stroke="#F0FFFF" stroke-width="1.3" stroke-linecap="round" stroke-linejoin="round"/><rect x="640" y="292" width="3" height="3" fill="#f01010"/></svg>
</body></html>
